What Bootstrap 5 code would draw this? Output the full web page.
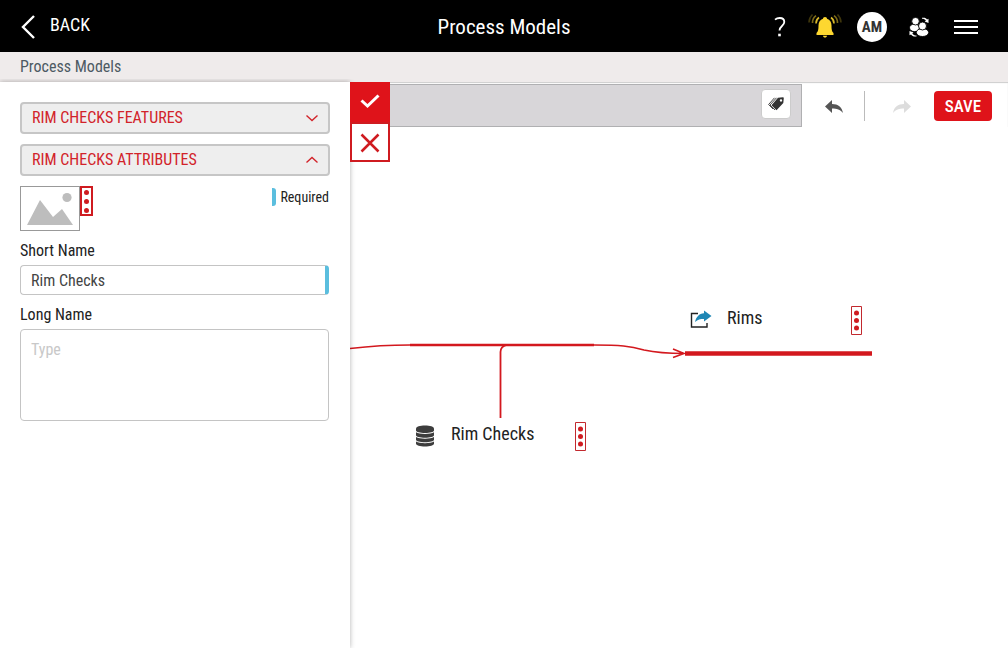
<!DOCTYPE html>
<html lang="en">
<head>
<meta charset="utf-8">
<meta name="viewport" content="width=device-width, initial-scale=1">
<title>Process Models</title>
<link href="https://cdn.jsdelivr.net/npm/bootstrap@5.3.0/dist/css/bootstrap.min.css" rel="stylesheet">
<style>
:root { --red: #df131a; --line-red: #cf1b20; --sky: #5bbede; }
body { font-family: "Roboto Condensed", "Liberation Sans Narrow", Roboto, sans-serif; font-size: 16px; line-height: 20px; color: #222; background: #fff; }
svg { display: block; flex: none; }
.plain { border: 0; background: none; padding: 0; color: inherit; }
.topbar { background: #000; color: #fff; height: 52px; padding: 2px 20px 0; }
.back { color: #fff; font-size: 18px; gap: 14px; height: 24px; line-height: 20px; }
.app-title { font-size: 21px; line-height: 24px; font-weight: 400; }
.bell-btn { margin-left: 22px; }
.avatar { width: 30px; height: 30px; background: #fff; color: #333; font-size: 15px; font-weight: 700; margin: 0 22px 0 15px; }
.menu-btn { margin: 0 10px 0 25px; }
.crumbs { background: #efebeb; color: #4d5a63; height: 30px; padding: 0 20px; }
.panel { width: 350px; padding: 20px; z-index: 2; box-shadow: 0 0 5px rgba(0,0,0,.3); clip-path: inset(-3px -6px 0 0); }
.fold { height: 32px; padding: 0 10px; margin-bottom: 10px; border: 2px solid #c6c6c6; border-radius: 4px; background: #eee; color: #d2232a; }
.fields { width: 309px; }
.thumb { width: 60px; height: 45px; border: 1px solid #999; background: #fff; }
.required-key { font-size: 14px; height: 22px; gap: 4px; }
.required-key::before { content: ""; width: 4px; height: 18px; background: var(--sky); border-radius: 0 3px 3px 0; }
.fields label { margin: 10px 0 4px; display: block; }
.fields .form-control { font-size: 16px; line-height: 20px; padding: 4px 10px; border-color: #c4c4c4; border-radius: 4px; color: #444; }
.fields input.form-control { height: 30px; border-right: 4px solid var(--sky); }
.fields textarea.form-control { height: 92px; padding-top: 10px; resize: none; }
.form-control::placeholder { color: #c8c8c8; }
.decide { top: 0; left: 0; width: 40px; z-index: 3; }
.decide button { height: 40px; border: 2px solid var(--line-red); background: #fff; color: var(--line-red); }
.decide .accept { background: var(--red); border-color: var(--red); color: #fff; }
.toolbar { padding-top: 2px; padding-right: 16px; box-shadow: inset 0 1px 1px #ccc; }
.search-strip { height: 43px; background: #d8d6d9; border: 1px solid #b0b0b2; padding: 0 10px 3px 0; }
.tag-btn { width: 30px; height: 30px; background: #fff; border: 1px solid #ccc; border-radius: 4px; }
.tools { width: 190px; padding-left: 23px; }
.divider { width: 1px; height: 30px; background: #bbb; margin: 0 28px 0 21px; }
.save { width: 58px; height: 30px; padding: 0; background: var(--red); color: #fff; border: 0; border-radius: 4px; font-size: 17px; line-height: 30px; font-weight: 500; }
.save:hover { background: #b90f15; color: #fff; }
.links { top: 0; left: 0; }
.node-item { font-size: 18px; line-height: 26px; height: 30px; color: #222; }
.node-item .node-name { margin-left: 15px; }
.node-rims { left: 340px; top: 223px; width: 172px; }
.node-checks { left: 64px; top: 339px; width: 172px; }
</style>
</head>
<body class="d-flex flex-column min-vh-100">
<header class="topbar d-flex align-items-center">
  <div class="col d-flex">
    <a href="#" class="back d-flex text-decoration-none">
      <svg width="16" height="24" viewBox="0 0 16 24" fill="none" stroke="#fff" stroke-width="2.4"><path d="M14 1 3 12l11 11"/></svg>BACK</a>
  </div>
  <h1 class="app-title m-0">Process Models</h1>
  <div class="col d-flex align-items-center justify-content-end">
    <button class="plain" aria-label="Help"><svg width="12" height="20" viewBox="0 0 12 20" fill="none" stroke="#fff" stroke-width="1.800"><path d="M1 2.600C2.300 1.500 4 1 5.700 1c2.900 0 4.600 1.500 4.600 4 0 4-4.800 4-4.800 8.500"/><path d="M4.200 18h2.600" stroke-width="2.600"/></svg></button>
    <button class="plain bell-btn" aria-label="Notifications"><svg width="34" height="26" viewBox="0 0 34 26"><path fill="#fdd730" d="M17 3c1.200 0 2 .8 2 1.700 3 1 4.500 3.400 4.500 6.800 0 5 .8 6.500 2 7.500v2H8.500v-2c1.200-1 2-2.500 2-7.500 0-3.400 1.500-5.800 4.500-6.800C15 3.800 15.800 3 17 3zM15 21.800h4c0 1-1 1.800-2 1.800s-2-.8-2-1.800z"/><g fill="none" stroke="#fdd730" stroke-width="1.600"><path opacity=".85" d="M8 9.500C8 7 8.800 5 11 3.500M26 9.500C26 7 25.200 5 23 3.500"/><path opacity=".5" d="M8 1.700C5.500 3.500 4.500 6 4.500 9M26 1.700c2.500 1.800 3.500 4.300 3.500 7.300"/><path opacity=".25" d="M4.500.5C2 3 1 5.500 1 8.500M29.500.5C32 3 33 5.500 33 8.500"/></g></svg></button>
    <button class="plain avatar rounded-circle">AM</button>
    <button class="plain" aria-label="Users"><svg width="20" height="20" viewBox="0 0 20 20" fill="#fff" stroke="#000" stroke-width=".9"><ellipse cx="5.500" cy="10.800" rx="5" ry="3.800"/><circle cx="6.500" cy="4.200" r="3.800"/><ellipse cx="13.500" cy="15.500" rx="6.200" ry="4"/><circle cx="13.500" cy="9" r="4"/><path stroke="none" d="M13 .8c2.600-.4 4.300.3 5 1.700l1.500-.7V6L15.700 4.500l1.200-.9C16 2.300 14.800 1.800 13 1.800zM7.500 19.500c-2.600.3-4.700-.5-5.500-2L.5 18.200V14l4 1.500-1.200.9c.8 1.300 2.200 2 4.200 2.100z"/></svg></button>
    <button class="plain menu-btn" aria-label="Menu"><svg width="24" height="16" viewBox="0 0 24 16" stroke="#fff" stroke-width="2"><path d="M0 2h24M0 8h24M0 14h24"/></svg></button>
  </div>
</header>
<nav class="crumbs d-flex align-items-center" aria-label="Breadcrumb">Process Models</nav>
<div class="d-flex flex-grow-1">
  <aside class="panel flex-shrink-0 bg-white position-relative">
    <button class="fold w-100 d-flex align-items-center justify-content-between">RIM CHECKS FEATURES
      <svg width="12" height="8" viewBox="0 0 12 8" fill="none" stroke="currentColor" stroke-width="1.400"><path d="M.5 1.500 6 6.500l5.500-5"/></svg></button>
    <button class="fold w-100 d-flex align-items-center justify-content-between" aria-expanded="true">RIM CHECKS ATTRIBUTES
      <svg width="12" height="8" viewBox="0 0 12 8" fill="none" stroke="currentColor" stroke-width="1.400"><path d="M.5 6.500 6 1.500l5.500 5"/></svg></button>
    <form class="fields">
      <div class="d-flex align-items-start">
        <div class="thumb"><svg width="58" height="43" viewBox="0 0 58 43" fill="#bdbdbd"><path d="M6 38 19 13l13 17 9-8 11 16z"/><circle cx="46" cy="10.500" r="4.600"/></svg></div>
        <button type="button" class="plain" aria-label="Image options"><svg width="13" height="30" viewBox="0 0 13 30"><path d="M1 1h11v28H1z" fill="#fff" stroke="#cf1b20" stroke-width="2"/><g fill="#cf1b20"><circle cx="6.500" cy="6.500" r="2.500"/><circle cx="6.500" cy="15.500" r="2.500"/><circle cx="6.500" cy="24.500" r="2.500"/></g></svg></button>
        <span class="required-key d-flex align-items-center ms-auto">Required</span>
      </div>
      <label for="shortName">Short Name</label>
      <input id="shortName" class="form-control" value="Rim Checks">
      <label for="longName">Long Name</label>
      <textarea id="longName" class="form-control" placeholder="Type"></textarea>
    </form>
  </aside>
  <main class="flex-grow-1 position-relative">
    <div class="toolbar d-flex">
      <div class="search-strip flex-grow-1 d-flex align-items-center justify-content-end">
        <button class="tag-btn p-0 d-flex align-items-center justify-content-center" aria-label="Tags"><svg width="16" height="14" viewBox="0 0 16 14"><path fill="#333" fill-rule="evenodd" d="M10 .8 15 .3c.5 0 .8.300.8.8L15.300 6 8.500 13.200 3.500 8.200zM13 2.200a1.200 1.200 0 1 0 0 2.400 1.200 1.200 0 0 0 0-2.400z"/><path d="M8.500.8 2 8l5 5M6.500.8.6 7.500 5 12" fill="none" stroke="#333" stroke-width=".9"/></svg></button>
      </div>
      <div class="tools d-flex align-items-center">
        <button class="plain" aria-label="Undo"><svg width="18" height="16" viewBox="0 0 18 16" fill="#555"><path d="M0 8.500 7 2v4c6 0 10 3 11 9-3-3.500-6-4.500-11-4.500V15z"/></svg></button>
        <span class="divider"></span>
        <button class="plain" aria-label="Redo" disabled><svg width="18" height="16" viewBox="0 0 18 16" fill="#ddd"><path d="M18 8.500 11 2v4C5 6 1 9 0 15c3-3.500 6-4.500 11-4.500V15z"/></svg></button>
        <button class="btn save ms-auto">SAVE</button>
      </div>
    </div>
    <div class="decide position-absolute d-flex flex-column">
      <button class="accept p-0 d-flex align-items-center justify-content-center" aria-label="Accept"><svg width="20" height="16" viewBox="0 0 20 16" fill="none" stroke="currentColor" stroke-width="3"><path d="m1.500 6.500 6 5.500 11-10.500"/></svg></button>
      <button class="p-0 d-flex align-items-center justify-content-center" aria-label="Cancel"><svg width="20" height="22" viewBox="0 0 20 22" stroke="currentColor" stroke-width="2.500"><path d="m1.500 3.500 17 17m0-17-17 17"/></svg></button>
    </div>
    <svg class="links position-absolute" width="530" height="350" viewBox="0 0 530 350" fill="none" stroke="#d3181e">
      <path stroke-width="1.600" d="M0 266.500C22 264 34 263 60 263M244 263c26 0 36 1 50 5 14 3 26 3.500 40 3.500M323 267l11 4.500-11 4"/>
      <path stroke-width="2.400" d="M60 263h184"/>
      <path stroke-width="1.800" d="M150.500 336v-66c0-4 2-6 6-7"/>
      <path stroke-width="4.500" d="M335 271.500h187"/>
    </svg>
    <div class="node-item node-rims position-absolute d-flex">
      <svg class="mt-1" width="22" height="20" viewBox="0 0 22 20"><path d="M8 4.500H1.500V18H17v-4" fill="none" stroke="#222" stroke-width="1.400"/><path fill="#1f87b5" d="M14 1.500 21.500 7 14 12.500V10c-4 0-6 .5-9 3C6 8 9 4.500 14 4.200z"/></svg>
      <span class="node-name">Rims</span>
      <button class="plain ms-auto d-flex" aria-label="Rims options"><svg width="11" height="30" viewBox="0 0 11 30"><path d="M.5 1.500h10v28H.5z" fill="#fff" stroke="#c2292e"/><g fill="#cf1b20"><circle cx="5.500" cy="8" r="2.500"/><circle cx="5.500" cy="15.500" r="2.500"/><circle cx="5.500" cy="23" r="2.500"/></g></svg></button>
    </div>
    <div class="node-item node-checks position-absolute d-flex">
      <svg class="mt-1" width="22" height="22" viewBox="0 0 22 22" fill="#3d3d3d"><path d="M2 3.500C2 1.800 6 .5 11 .5s9 1.300 9 3v2c0 1.500-4 2.500-9 2.500s-9-1-9-2.500z"/><path d="M2 7.200c3.500 2.300 14.500 2.300 18 0v3c0 1.500-4 2.500-9 2.500s-9-1-9-2.500zM2 12c3.500 2.300 14.500 2.300 18 0v2.800c0 1.500-4 2.500-9 2.500s-9-1-9-2.500zM2 16.600c3.500 2.300 14.500 2.300 18 0v2.200c0 1.500-4 2.700-9 2.700s-9-1.200-9-2.700z"/></svg>
      <span class="node-name">Rim Checks</span>
      <button class="plain ms-auto d-flex" aria-label="Rim Checks options"><svg width="11" height="30" viewBox="0 0 11 30"><path d="M.5 1.500h10v28H.5z" fill="#fff" stroke="#c2292e"/><g fill="#cf1b20"><circle cx="5.500" cy="8" r="2.500"/><circle cx="5.500" cy="15.500" r="2.500"/><circle cx="5.500" cy="23" r="2.500"/></g></svg></button>
    </div>
  </main>
</div>
<script src="https://cdn.jsdelivr.net/npm/bootstrap@5.3.0/dist/js/bootstrap.bundle.min.js"></script>
</body>
</html>
